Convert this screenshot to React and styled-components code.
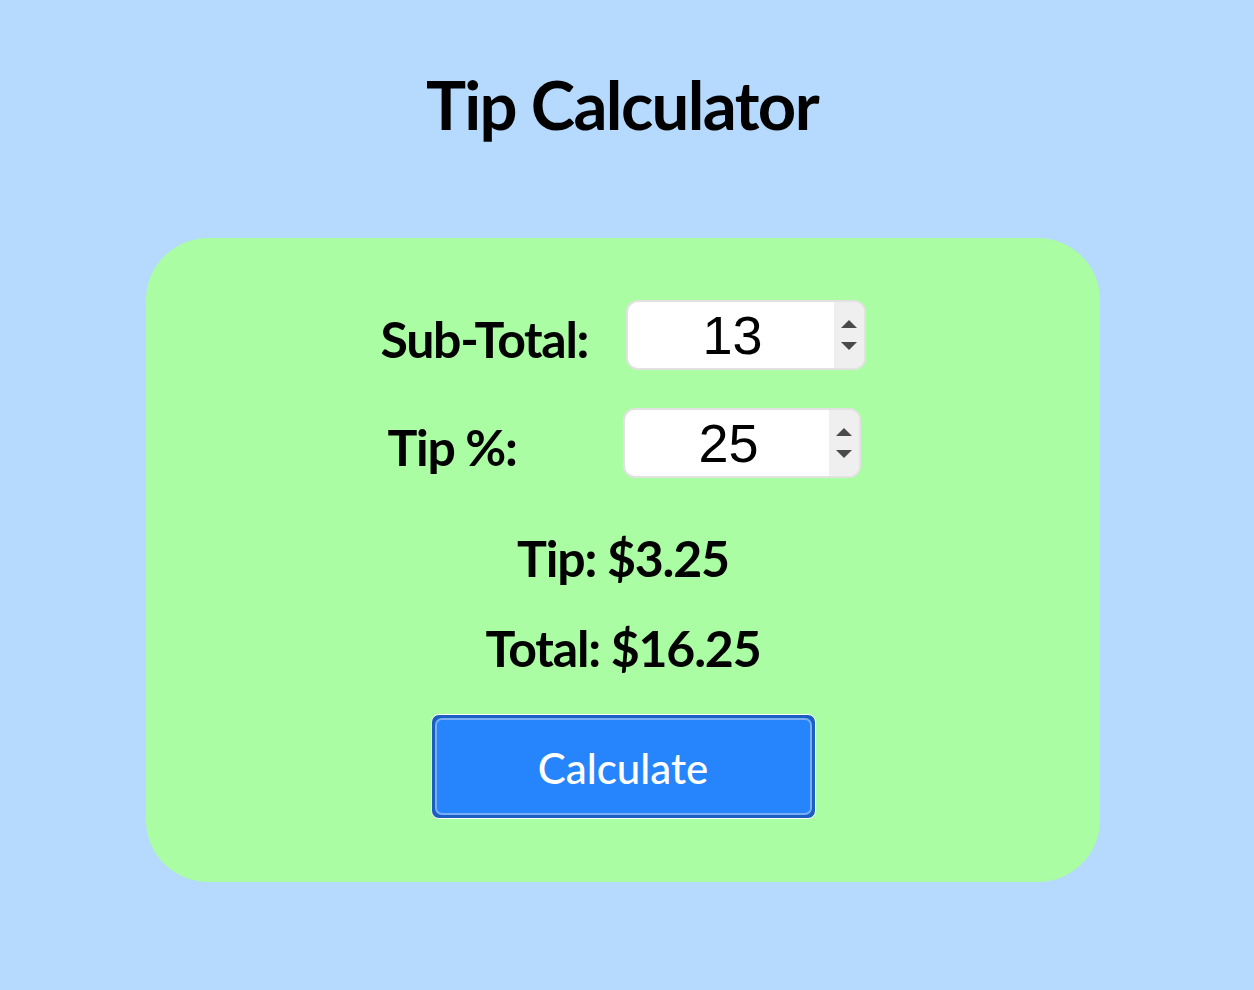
import React, {useState} from 'react';
import styled, {createGlobalStyle} from 'styled-components';

const GlobalStyle = createGlobalStyle`
    html, body {
        margin: 0;
        padding: 0;
        background-color: #b5dafd;
        font-family: Lato, "Noto Sans", sans-serif;
    }
`;

const Page = styled.main`
    width: 1254px;
    min-height: 990px;
    display: flex;
    flex-direction: column;
    align-items: center;
`;

const Title = styled.h1`
    margin: 62px 10px 0 0;
    height: 176px;
    font-size: 67px;
    font-weight: 700;
    letter-spacing: -1.6px;
    color: #000;
    line-height: 84px;
`;

const Card = styled.section`
    width: 954px;
    height: 644px;
    box-sizing: border-box;
    margin-left: -8px;
    padding-top: 62px;
    background-color: #abfda3;
    border-radius: 62px;
    display: flex;
    flex-direction: column;
    align-items: center;
`;

const Row = styled.div`
    display: flex;
    align-items: center;
    margin: ${props => props.margin};
    transform: translateX(${props => props.shift}px);
`;

const Label = styled.label`
    width: ${props => props.width}px;
    padding-top: 8px;
    font-size: 50px;
    font-weight: 700;
    letter-spacing: -1.3px;
    line-height: 60px;
    color: #000;
`;

const InputBox = styled.div`
    width: ${props => props.width}px;
    height: 70px;
    box-sizing: border-box;
    display: flex;
    background-color: #fff;
    border: 2px solid #e2e2e2;
    border-radius: 12px;
    overflow: hidden;
`;

const NumberInput = styled.input`
    flex: 1;
    min-width: 0;
    border: none;
    outline: none;
    background: transparent;
    text-align: center;
    font-family: "Liberation Sans", Arial, sans-serif;
    font-size: 54px;
    color: #000;
    padding: 0 0 0 4px;
    -moz-appearance: textfield;

    &::-webkit-inner-spin-button,
    &::-webkit-outer-spin-button {
        -webkit-appearance: none;
        margin: 0;
    }
`;

const Spinner = styled.div`
    width: 30px;
    background-color: #efefef;
    display: flex;
    flex-direction: column;
    align-items: center;
    justify-content: center;
    gap: 14px;
`;

const Arrow = styled.span`
    width: 0;
    height: 0;
    border-left: 8px solid transparent;
    border-right: 8px solid transparent;
    ${props => props.up
        ? 'border-bottom: 8px solid #4a4a4a;'
        : 'border-top: 8px solid #4a4a4a;'}
`;

const Result = styled.p`
    margin: ${props => props.margin};
    font-size: 50px;
    font-weight: 700;
    letter-spacing: -1.2px;
    color: #000;
    line-height: 56px;
`;

const CalcButton = styled.button`
    margin-top: 38px;
    width: 385px;
    height: 105px;
    box-sizing: border-box;
    border-radius: 8px;
    border: 1px solid #ffffff;
    background-color: #1b5fc3;
    padding: 3px;
    cursor: pointer;
`;

const ButtonFace = styled.span`
    display: flex;
    align-items: center;
    justify-content: center;
    height: 100%;
    box-sizing: border-box;
    padding-top: 2px;
    border: 2px solid #79adf5;
    border-radius: 7px;
    background-color: #2685fc;
    color: #fff;
    font-family: Lato, sans-serif;
    font-size: 42px;
    font-weight: 500;
`;

const NumberField = ({value, setValue, width}) => (
    <InputBox width={width}>
        <NumberInput type="number" value={value} onChange={e => setValue(e.target.value)} />
        <Spinner>
            <Arrow up />
            <Arrow />
        </Spinner>
    </InputBox>
);

const App = () => {
    const [subTotal, setSubTotal] = useState('13');
    const [tipPercent, setTipPercent] = useState('25');
    const [tip, setTip] = useState(3.25);

    const calculate = () => {
        setTip(Number(subTotal) * Number(tipPercent) / 100);
    };

    const total = Number(subTotal) + tip;

    return (
        <Page>
            <GlobalStyle />
            <Title>Tip Calculator</Title>
            <Card>
                <Row margin="0" shift={0}>
                    <Label width={245}>Sub-Total:</Label>
                    <NumberField value={subTotal} setValue={setSubTotal} width={240} />
                </Row>
                <Row margin="38px 0 0 0" shift={1}>
                    <Label width={235}>Tip %:</Label>
                    <NumberField value={tipPercent} setValue={setTipPercent} width={238} />
                </Row>
                <Result margin="52px 0 0 0">Tip: ${tip.toFixed(2)}</Result>
                <Result margin="34px 0 0 0">Total: ${total.toFixed(2)}</Result>
                <CalcButton onClick={calculate}>
                    <ButtonFace>Calculate</ButtonFace>
                </CalcButton>
            </Card>
        </Page>
    );
};

export default App;
